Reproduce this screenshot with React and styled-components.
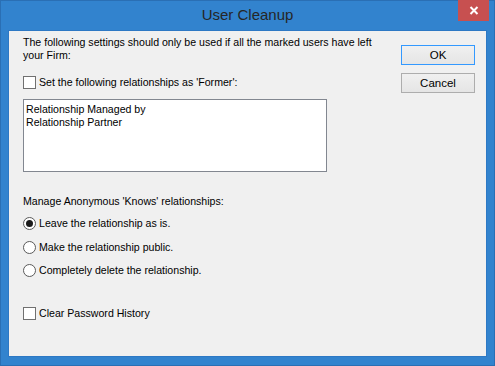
import React from 'react';
import styled, { createGlobalStyle } from 'styled-components';

const Global = createGlobalStyle`
  html, body { margin: 0; padding: 0; background: #fff; }
  body { font-family: "Liberation Sans", Arial, sans-serif; }
`;

const Window = styled.div`
  width: 495px;
  height: 366px;
  box-sizing: border-box;
  background: #3283ce;
  border: 1px solid #2a6fb4;
  display: flex;
  flex-direction: column;
  padding: 0 7px 8px 7px;
`;

const TitleBar = styled.div`
  height: 29px;
  flex: none;
  position: relative;
  display: flex;
  align-items: center;
  justify-content: center;
`;

const Title = styled.div`
  font-family: "Liberation Sans", Arial, sans-serif;
  font-size: 15px;
  color: #262626;
  margin-top: -2px;
`;

const CloseBtn = styled.div`
  position: absolute;
  top: -1px;
  right: -2px;
  width: 31px;
  height: 21px;
  background: #c75050;
  display: flex;
  align-items: center;
  justify-content: center;
`;

const Client = styled.div`
  flex: 1;
  background: #f0f0f0;
  border: 1px solid #2d78c4;
  display: flex;
  font-size: 10.6px;
  color: #000;
`;

const Main = styled.div`
  flex: 1;
  padding: 5px 0 0 14px;
  display: flex;
  flex-direction: column;
`;

const Side = styled.div`
  width: 74px;
  flex: none;
  padding: 14px 11px 0 0;
  display: flex;
  flex-direction: column;
  gap: 8px;
`;

const Para = styled.div`
  line-height: 13px;
  width: 368px;
`;

const Option = styled.label`
  display: flex;
  align-items: center;
  gap: 3px;
  height: 14px;
  margin-top: ${p => p.$top || 0}px;
`;

const Box = styled.span`
  width: 11px;
  height: 11px;
  border: 1px solid #707070;
  background: #fff;
  flex: none;
`;

const Radio = styled.span`
  width: 11px;
  height: 11px;
  border: 1px solid #5a5a5a;
  border-radius: 50%;
  background: #fff;
  flex: none;
  display: flex;
  align-items: center;
  justify-content: center;
  &::after {
    content: '';
    display: ${p => (p.$on ? 'block' : 'none')};
    width: 7px;
    height: 7px;
    border-radius: 50%;
    background: #1b1b1b;
  }
`;

const List = styled.div`
  margin-top: 10px;
  border: 1px solid #828790;
  background: #fff;
  padding: 3px 2px;
  box-sizing: border-box;
  height: 73px;
  width: 304px;
  line-height: 13px;
`;

const Label = styled.div`
  margin-top: ${p => p.$top || 0}px;
  line-height: 13px;
`;

const Button = styled.div`
  height: 20px;
  box-sizing: border-box;
  border: 1px solid ${p => (p.$default ? '#3399ff' : '#adadad')};
  background: linear-gradient(#f0f0f0, #e5e5e5);
  display: flex;
  align-items: center;
  justify-content: center;
  font-size: 11.5px;
`;

export default function App() {
  return (
    <>
      <Global />
      <Window>
        <TitleBar>
          <Title>User Cleanup</Title>
          <CloseBtn>
            <svg width="10" height="9" viewBox="0 0 10 9">
              <path d="M1.5 1 L8.5 8 M8.5 1 L1.5 8" stroke="#fff" strokeWidth="2" />
            </svg>
          </CloseBtn>
        </TitleBar>
        <Client>
          <Main>
            <Para>
              The following settings should only be used if all the marked users have left your Firm:
            </Para>
            <Option $top={13}>
              <Box />
              Set the following relationships as 'Former':
            </Option>
            <List>
              <div>Relationship Managed by</div>
              <div>Relationship Partner</div>
            </List>
            <Label $top={23}>Manage Anonymous 'Knows' relationships:</Label>
            <Option $top={8}>
              <Radio $on />
              Leave the relationship as is.
            </Option>
            <Option $top={10}>
              <Radio />
              Make the relationship public.
            </Option>
            <Option $top={9}>
              <Radio />
              Completely delete the relationship.
            </Option>
            <Option $top={29}>
              <Box />
              Clear Password History
            </Option>
          </Main>
          <Side>
            <Button $default>OK</Button>
            <Button>Cancel</Button>
          </Side>
        </Client>
      </Window>
    </>
  );
}
